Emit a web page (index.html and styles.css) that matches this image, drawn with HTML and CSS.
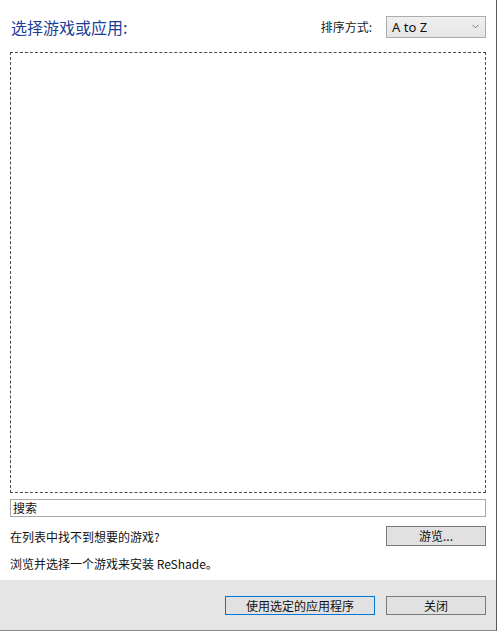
FILE: index.html
```html
<!DOCTYPE html>
<html lang="zh-CN">
<head>
<meta charset="utf-8">
<title>选择游戏或应用</title>
<link rel="stylesheet" href="styles.css">
</head>
<body>
<div class="window">
  <div class="content">
    <div class="header">
      <h1 class="title">选择游戏或应用:</h1>
      <div class="sort">
        <span class="sort-label">排序方式:</span>
        <div class="combo">
          <span class="combo-text">A to Z</span>
          <svg class="chevron" width="7" height="5" viewBox="0 0 7 5"><polyline points="0.5,0.8 3.5,3.8 6.5,0.8" fill="none" stroke="#777" stroke-width="1"/></svg>
        </div>
      </div>
    </div>
    <div class="list"></div>
    <div class="search">搜索</div>
    <div class="browse-row">
      <span class="text">在列表中找不到想要的游戏?</span>
      <button class="btn">游览...</button>
    </div>
    <div class="hint">浏览并选择一个游戏来安装 ReShade。</div>
  </div>
  <div class="footer">
    <button class="btn btn-primary">使用选定的应用程序</button>
    <button class="btn">关闭</button>
  </div>
</div>
</body>
</html>
```
FILE: styles.css
```css
html, body {
  margin: 0;
  padding: 0;
  background: #ffffff;
}
body {
  font-family: "Noto Sans", "Noto Sans CJK SC", sans-serif;
  font-size: 12px;
  color: #1a1a1a;
}
.window {
  width: 496px;
  height: 630px;
  border-right: 1px solid #5a5a5a;
  border-bottom: 1px solid #8a8a8a;
  display: flex;
  flex-direction: column;
  background: #ffffff;
}
.content {
  height: 580px;
  padding: 0 10px 0 10px;
  display: flex;
  flex-direction: column;
}
.header {
  height: 52px;
  display: flex;
  justify-content: space-between;
  align-items: flex-start;
}
.title {
  margin: 16px 0 0 1px;
  font-size: 16px;
  font-weight: normal;
  line-height: 22px;
  color: #1b3c9a;
  font-family: "Noto Sans CJK SC", sans-serif;
}
.sort {
  display: flex;
  align-items: center;
  margin-top: 15px;
}
.sort-label {
  font-family: "Noto Sans CJK SC", sans-serif;
  font-size: 12px;
  margin-right: 14px;
  line-height: 22px;
  margin-top: 1px;
}
.combo {
  width: 98px;
  height: 20px;
  border: 1px solid #acacac;
  background: linear-gradient(#efefef, #e5e5e5);
  display: flex;
  align-items: center;
  justify-content: space-between;
  padding: 0 6px 0 5px;
  box-sizing: border-box;
  width: 100px;
  height: 22px;
}
.combo-text {
  font-family: "Noto Sans", sans-serif;
  font-size: 13px;
  color: #111;
}
.chevron {
  margin-top: -1px;
}
.list {
  height: 441px;
  border: 1px dashed #4a4a4a;
  box-sizing: border-box;
  background: #ffffff;
}
.search {
  margin-top: 6px;
  height: 18px;
  border: 1px solid #a8a8a8;
  box-sizing: border-box;
  padding-left: 2px;
  font-family: "Noto Sans CJK SC", sans-serif;
  font-size: 12px;
  line-height: 16px;
  color: #111;
}
.browse-row {
  margin-top: 9px;
  height: 20px;
  display: flex;
  justify-content: space-between;
  align-items: center;
}
.text, .hint {
  font-family: "Noto Sans CJK SC", sans-serif;
  font-size: 12px;
  color: #111;
}
.hint {
  margin-top: 8px;
  line-height: 20px;
}
.btn {
  width: 100px;
  height: 20px;
  box-sizing: border-box;
  border: 1px solid #7a7a7a;
  background: #e1e1e1;
  font-family: "Noto Sans CJK SC", sans-serif;
  font-size: 12px;
  color: #111;
  padding: 0;
  margin: 0;
  line-height: 18px;
}
.footer {
  flex: 1;
  background: #e5e5e5;
  display: flex;
  justify-content: flex-end;
  align-items: flex-start;
  gap: 11px;
  padding: 16px 10px 0 0;
  box-sizing: border-box;
}
.footer .btn {
  height: 19px;
  line-height: 17px;
}
.btn-primary {
  width: 150px;
  border-color: #0078d7;
}
```
